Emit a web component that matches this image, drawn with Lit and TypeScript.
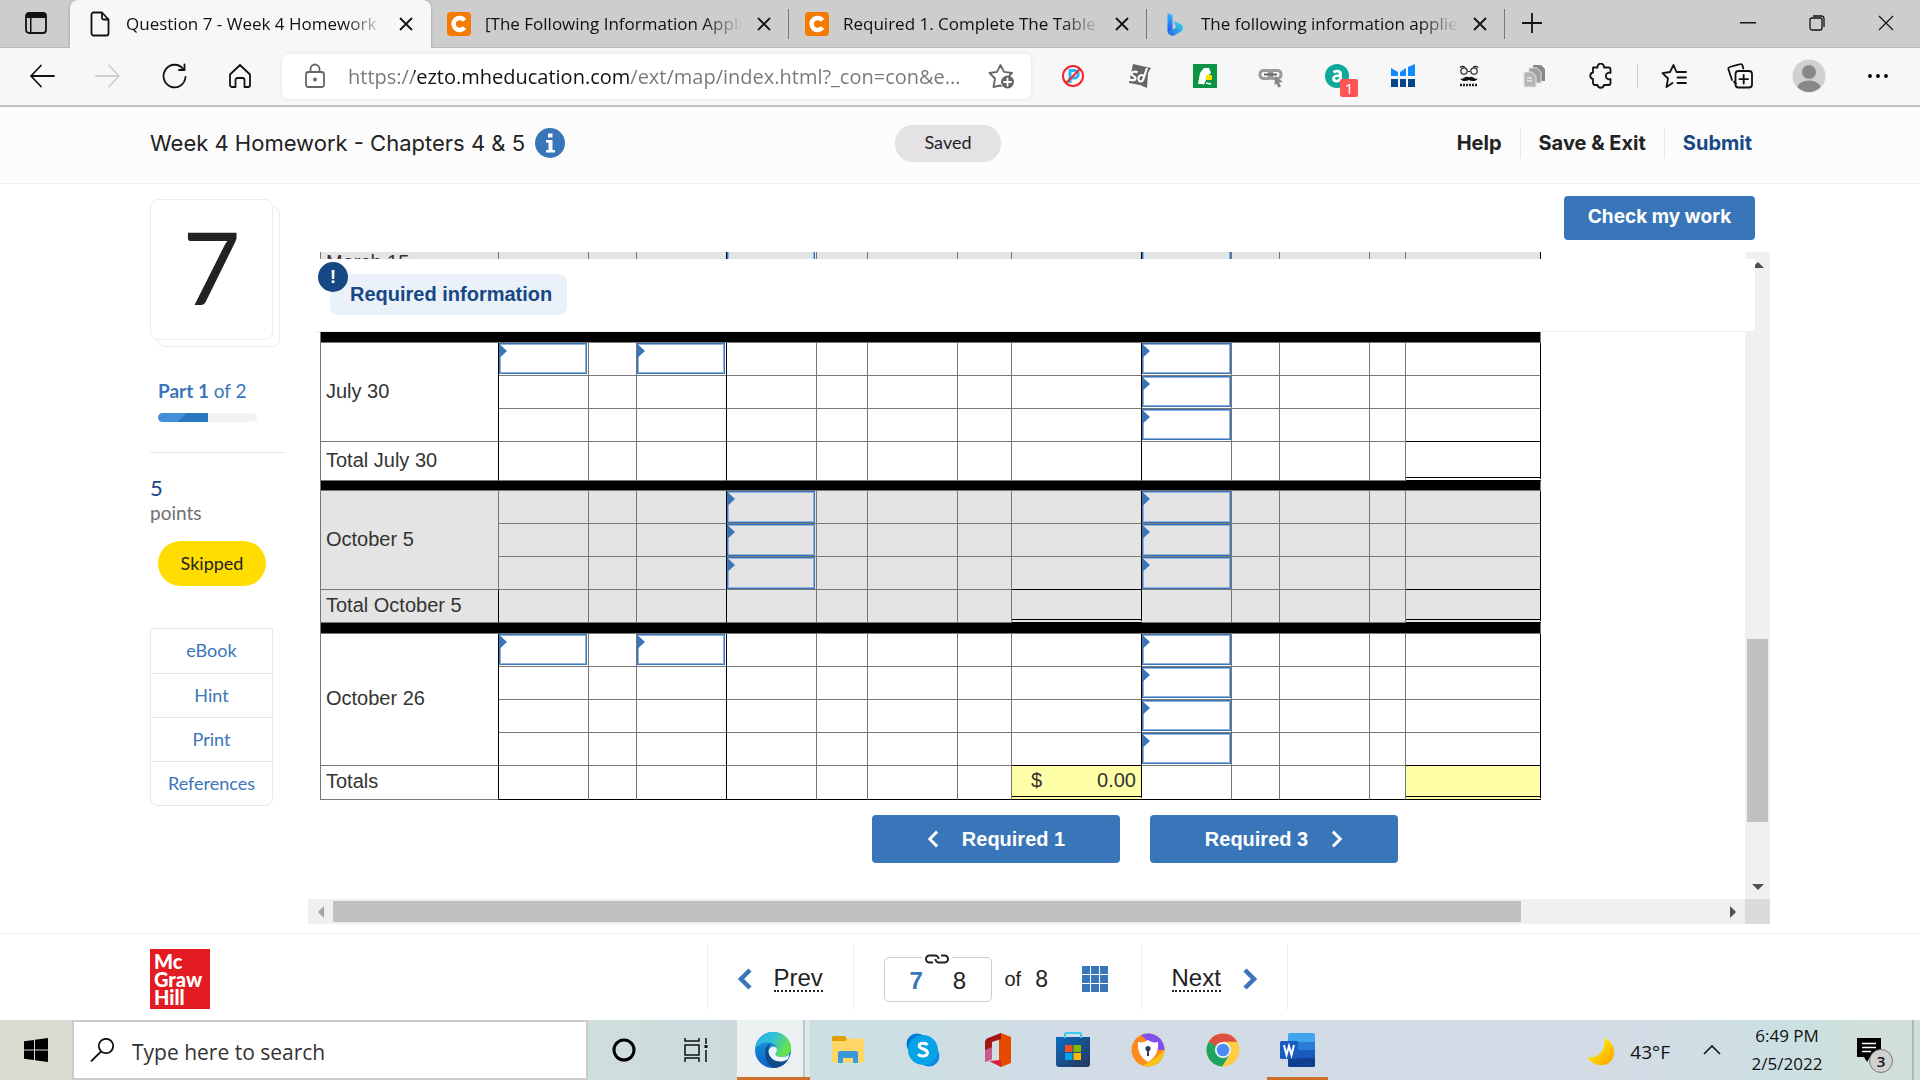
import { LitElement, html, svg, css, nothing } from "lit";
import { customElement, query } from "lit/decorators.js";
import { classMap } from "lit/directives/class-map.js";

/* ---------- Browser chrome ---------- */

const closeIcon = html`<svg width="14" height="14" viewBox="0 0 14 14" fill="none" stroke="#111" stroke-width="1.8"><path d="M1 1l12 12M13 1L1 13" /></svg>`;
const pageIcon = html`<svg width="20" height="26" viewBox="0 0 20 26" fill="none" stroke="#111" stroke-width="1.8" stroke-linejoin="round"><path d="M3.500 1.500h8.500l6.500 7v14a2 2 0 0 1-2 2h-13a2 2 0 0 1-2-2v-19a2 2 0 0 1 2-2z" /><path d="M12 1.500v5.500a1.500 1.500 0 0 0 1.500 1.500h5" /></svg>`;
const cheggIcon = html`<svg width="24" height="24" viewBox="0 0 24 24"><rect width="24" height="24" rx="4" fill="#f47b00" /><path d="M17.500 8.600A6 6 0 1 0 17.500 15.400" fill="none" stroke="#fff" stroke-width="4.400" /></svg>`;
const bingIcon = html`<svg width="24" height="24" viewBox="0 0 24 24"><defs><linearGradient id="bg1" x1="0" y1="0" x2="0" y2="1"><stop offset="0" stop-color="#37bdff" /><stop offset="1" stop-color="#1b48ef" /></linearGradient><linearGradient id="bg2" x1="0" y1="1" x2="1" y2="0"><stop offset="0" stop-color="#2764e7" /><stop offset="1" stop-color="#38e0ee" /></linearGradient></defs><path d="M4.500 1l5 2v15l-2.500 3.500-2.500-2z" fill="url(#bg1)" /><path d="M11 9l7.500 3.500c2 1.500 2 5 0 6.700L11 23.500c-2.500 1-6-1-6.500-4l8.500-3.700z" fill="url(#bg2)" /></svg>`;

interface Tab {
  title: string;
  icon: unknown;
  active?: boolean;
}

const tabs: Tab[] = [
  { title: "Question 7 - Week 4 Homework", icon: pageIcon, active: true },
  { title: "[The Following Information Appli", icon: cheggIcon },
  { title: "Required 1. Complete The Table T", icon: cheggIcon },
  { title: "The following information applie", icon: bingIcon },
];

const stroke = (body: unknown, color = "#111", size = 26) =>
  html`<svg width=${size} height=${size} viewBox="0 0 26 26" fill="none" stroke=${color} stroke-width="1.8" stroke-linejoin="round" stroke-linecap="round">${body}</svg>`;

const backIcon = stroke(svg`<path d="M12 2.500L2 13l10 10.500M2 13h23" />`);
const forwardIcon = stroke(svg`<path d="M14 2.500L24 13 14 23.500M24 13H1" />`, "#cfcfcf");
const reloadIcon = stroke(svg`<path d="M23.500 7V1.500M23.500 7H18M22.500 6.500A11 11.300 0 1 0 24.500 14" />`);
const homeIcon = stroke(svg`<path d="M3 11.500L13 2l10 9.500V22a2 2 0 0 1-2 2h-3.500v-7a2 2 0 0 0-2-2h-5a2 2 0 0 0-2 2v7H5a2 2 0 0 1-2-2z" />`);
const lockIcon = stroke(svg`<rect x="4" y="9" width="18" height="15" rx="2.500" /><path d="M8.500 9V6a4.500 4.500 0 0 1 9 0v3" /><circle cx="13" cy="16.500" r="1" fill="#666" />`, "#666");
const starAddIcon = stroke(svg`<path d="M13 23l-1-.5-6.500 1.500L7 15.500 1.500 10l7.500-1.200L12.500 2 16 8.800l8 1.200-2.500 2.500" /><circle cx="19.500" cy="19" r="6.500" fill="#666" stroke="none" /><path d="M19.500 15.500v7M16 19h7" stroke="#fff" />`, "#666");

const extensions: { label: string; icon: unknown }[] = [
  { label: "Blocker", icon: html`<svg width="24" height="24" viewBox="0 0 24 24"><path d="M9 19V6.500h4.500a3.500 3.500 0 0 1 0 7.500H9" fill="none" stroke="#29b6f6" stroke-width="3" /><circle cx="12" cy="12" r="10" fill="none" stroke="#f3242b" stroke-width="2" /><path d="M5 19L19 5" stroke="#f3242b" stroke-width="2" /></svg>` },
  { label: "Study", icon: html`<svg width="24" height="24" viewBox="0 0 24 24"><path d="M6 0l18 4-3 5-1 15-7-3-11-2 2-9z" fill="#666" /><path d="M10.500 8.500c-2-1.500-6-1-6 1.500 0 2.200 4.500 2 4 4.500-.4 2.300-4.500 2-7 .5M17 12c-3-2-6 0-5.500 3.500.5 2.500 3.500 2.500 4.500.5L20 4" fill="none" stroke="#fff" stroke-width="2.200" /></svg>` },
  { label: "Coupons", icon: html`<svg width="24" height="24" viewBox="0 0 24 24"><rect width="24" height="24" fill="#0b9444" /><path d="M7 9l4-5h5l2 5-5 4-2 7H5z" fill="#fff" /><path d="M10 20.500l3-6M13 19l5 1" stroke="#fff" stroke-width="1.500" /><rect x="13" y="11" width="6" height="5" rx="1" fill="#ffe100" /></svg>` },
  { label: "Links", icon: html`<svg width="26" height="24" viewBox="0 0 26 24" fill="none"><g stroke="#999" stroke-width="3"><rect x="2" y="6.500" width="12" height="8" rx="3.500" /><rect x="11" y="6.500" width="12" height="8" rx="3.500" /></g><path d="M6 10.500h13" stroke="#666" stroke-width="2" /><path d="M17 12l8 6-4 .5 2 4-3 1-1.500-4-2 2z" fill="#888" /></svg>` },
  { label: "Assistant", icon: html`<span class="ext-a"><svg width="24" height="24" viewBox="0 0 24 24"><circle cx="12" cy="12" r="12" fill="#0ca89b" /><path d="M8.500 8.500c2-2 7-2 7 1.500v7M15.500 12c-3-.8-7 0-7 2.700 0 3.300 6 3 7-.2" fill="none" stroke="#fff" stroke-width="2.800" /></svg><span class="count">1</span></span>` },
  { label: "Metrics", icon: html`<svg width="24" height="24" viewBox="0 0 24 24"><path d="M0 4l7 4v4H0zM9 8l6-4v8H9zM17 3l7-3v12h-7z" fill="#1189ff" /><path d="M0 15h7v8H0zM9 15h6v8H9zM17 15h7v8h-7z" fill="#064488" /></svg>` },
  { label: "Disguise", icon: html`<svg width="20" height="22" viewBox="0 0 20 22" fill="none" stroke="#222"><path d="M1 2.500c1.500-1.500 3-1.500 5-.5M19 2.500c-1.500-1.500-3-1.500-5-.5M9 6.500h2" stroke-width="1.200" /><circle cx="5" cy="6" r="3.200" stroke-width="1.200" /><circle cx="15" cy="6" r="3.200" stroke-width="1.200" /><path d="M10 12.300c-3-1.500-4.500.2-6 1.200-1 .6-2 .3-2.500 0 0 2.500 5.500 3.500 8.500 1.500 3 2 8.500 1 8.500-1.500-.5.300-1.500.6-2.500 0-1.500-1-3-2.700-6-1.200z" fill="#111" stroke="none" /><path d="M1 20h18" stroke-width="2.300" stroke-dasharray="2 1" /></svg>` },
  { label: "Copy", icon: html`<svg width="24" height="24" viewBox="0 0 24 24"><path d="M10 1h8l4 4v12H10z" fill="#888" /><path d="M6 4h8l4 4v11H6z" fill="#a0a0a0" stroke="#ddd" /><path d="M1 8h8l4 4v11H1z" fill="#b5b5b5" stroke="#e5e5e5" /><path d="M4 14h5M4 17h5" stroke="#fff" /></svg>` },
  { label: "Extensions", icon: stroke(svg`<path d="M5 4.500h4.500a3.300 3.300 0 1 1 6.500 0h4.500a2 2 0 0 1 2 2V10a3.300 3.300 0 1 0 0 6v4a2 2 0 0 1-2 2H16a3.300 3.300 0 0 1-6.500 0H7a2 2 0 0 1-2-2v-4a3.300 3.300 0 0 1 0-6.500z" />`) },
];

const favoritesIcon = stroke(svg`<path d="M15.500 9L12.500 2 9 9l-7.500 1.200L7 15.500 5.500 24l6-4M16.500 9H25M16.500 14.500H25M16.500 20H25" />`);
const collectionsIcon = stroke(svg`<path d="M5 17L1.500 6.500a2 2 0 0 1 1.300-2.500L13 1.200A2 2 0 0 1 15.500 2.500l.8 3M9 20.500a3 3 0 0 1-2-2" /><rect x="8.500" y="8" width="16.500" height="16.500" rx="3" /><path d="M16.700 12v8.500M12.500 16.200H21" />`);
const avatarIcon = html`<svg width="34" height="34" viewBox="0 0 34 34"><clipPath id="av"><circle cx="17" cy="17" r="16" /></clipPath><circle cx="17" cy="17" r="16.500" fill="#d2d0ce" /><g clip-path="url(#av)" fill="#8a8886"><circle cx="17" cy="13" r="7" /><ellipse cx="17" cy="30" rx="12" ry="8.500" /></g></svg>`;
const dotsIcon = html`<svg width="22" height="6" viewBox="0 0 22 6"><circle cx="3" cy="3" r="1.900" /><circle cx="11" cy="3" r="1.900" /><circle cx="19" cy="3" r="1.900" /></svg>`;

/* ---------- Worksheet data ---------- */

/* One entry per body column; the label column comes first in the table. */
const columns = [90, 48, 90, 90, 51, 90, 54, 130, 90, 48, 90, 36, 135];
const BALANCE_A = 7;
const BALANCE_B = 12;

interface Block {
  label: string;
  total: string;
  rows: number[][];
  shaded?: boolean;
  /** Balance columns that carry a double underline in the total row. */
  sums: number[];
  size: "short" | "tall" | "last" | "mid";
  final?: boolean;
}

const blocks: Block[] = [
  { label: "March 15", total: "Total March 15", shaded: true, rows: [[3, 8], [3, 8]], sums: [BALANCE_B], size: "mid" },
  { label: "July 30", total: "Total July 30", rows: [[0, 2, 8], [8], [8]], sums: [BALANCE_B], size: "tall" },
  { label: "October 5", total: "Total October 5", shaded: true, rows: [[3, 8], [3, 8], [3, 8]], sums: [BALANCE_A, BALANCE_B], size: "short" },
  { label: "October 26", total: "Totals", rows: [[0, 2, 8], [8], [8], [8]], sums: [BALANCE_A, BALANCE_B], size: "last", final: true },
];

@customElement("work-sheet")
export class WorkSheet extends LitElement {
  static styles = css`
    :host { display: block; }
    table { border-collapse: separate; border-spacing: 0; table-layout: fixed; width: 1221px; border-left: 1px solid #777; color: #333; font: 20px/24px "Liberation Sans", Arial, sans-serif; }
    col.label { width: 178px; }
    td, th { box-sizing: border-box; height: 33px; padding: 0; border: 0 solid #777; border-right-width: 1px; border-bottom-width: 1px; font-weight: 400; text-align: left; }
    th { padding: 0 0 3px 5px; border-right-color: #000; }
    .shaded td, .shaded th { background: #e4e4e4; }
    .shaded th.span { border-right-color: #777; }
    td.edge { border-right-color: #000; }
    td.over { border-bottom-color: #000; }
    .mid td, .mid th { height: 35px; }
    .tall td, .tall th { height: 39px; }
    .last td, .last th { height: 34px; }
    .last td { border-bottom-color: #000; }
    td.sum { border-bottom: 4px double #000; }
    .last td.sum { background: #ffffa8; }
    .rule td { height: 11px; background: #000; }
    .rule.slim td { height: 10px; }
    .money { display: flex; justify-content: space-between; padding: 0 5px 2px 19px; }
    .field { position: relative; display: flex; height: 32px; }
    .field svg { position: absolute; left: 0; top: 2px; }
    input { box-sizing: border-box; width: 88px; height: 31px; padding: 0 12px; border: 1px solid #3a75b9; box-shadow: inset 0 0 0 1px #8fb1da; background: transparent; font: inherit; color: inherit; outline: none; border-radius: 0; }
    .wide input { width: 89px; }
    .shaded input { height: 32px; }
  `;

  private cell(block: Block, row: number, col: number) {
    const isInput = block.rows[row].includes(col);
    const classes = {
      edge: col === 2 || col === 7 || col === 12,
      over: row === block.rows.length - 1 && block.sums.includes(col),
      wide: col === 8,
    };
    return html`<td class=${classMap(classes)}>${isInput
      ? html`<div class="field"><input type="text" aria-label="${block.label}, line ${row + 1}, column ${col + 1}" /><svg width="8" height="12" viewBox="0 0 8 12"><path d="M0 0h1.500L8 6l-6.500 6H0z" fill="#3a75b9" /></svg></div>`
      : nothing}</td>`;
  }

  private block(block: Block) {
    return html`
      <tbody class=${block.shaded ? "shaded" : ""}>
        ${block.rows.map((_, r) => html`<tr>
          ${r === 0 ? html`<th class="span" scope="rowgroup" rowspan=${block.rows.length}>${block.label}</th>` : nothing}
          ${columns.map((_w, c) => this.cell(block, r, c))}
        </tr>`)}
        <tr class=${block.size}>
          <th scope="row">${block.total}</th>
          ${columns.map((_w, c) => html`<td class=${classMap({ edge: c === 2 || c === 7 || c === 12, sum: block.sums.includes(c) })}>${block.final && c === BALANCE_A
            ? html`<div class="money"><span>$</span><span>0.00</span></div>`
            : nothing}</td>`)}
        </tr>
      </tbody>
      ${block.final ? nothing : html`<tbody><tr class=${classMap({ rule: true, slim: block.size === "tall" })}><td colspan="14"></td></tr></tbody>`}
    `;
  }

  render() {
    return html`<table>
      <colgroup><col class="label" />${columns.map((w) => html`<col style="width:${w}px" />`)}</colgroup>
      ${blocks.map((b) => this.block(b))}
    </table>`;
  }
}

/* ---------- Taskbar icons ---------- */

const edgeLogo = html`<svg width="36" height="36" viewBox="0 0 36 36"><defs><linearGradient id="e1" x1="0" y1="0" x2="1" y2=".4"><stop offset="0" stop-color="#2aa8e8" /><stop offset=".5" stop-color="#2fc2d8" /><stop offset="1" stop-color="#66e24a" /></linearGradient><linearGradient id="e2" x1="0" y1="0" x2="0" y2="1"><stop offset="0" stop-color="#1b9de2" /><stop offset="1" stop-color="#0b62c4" /></linearGradient></defs><circle cx="18" cy="18" r="18" fill="url(#e2)" /><path d="M0 17C1 7 9 0 18 0c11 0 18 8 18 15.500 0 6-4.500 9.500-9.500 9.500-4 0-6-1.500-6-2.800 0-1.200 1.500-1.700 1.500-4.700 0-4-4-7-9-7-6 0-11 3-13 6.500z" fill="url(#e1)" /><path d="M10 20c0-4.500 3-7.500 6-8.500-2.500 2-3 5-2.500 8 1 5.500 6 9.500 12 9.500 3.500 0 6-.8 7.500-2C30.500 32.500 25 36 18.500 36 13.500 34 10 27 10 20z" fill="#114a8b" /><path d="M22 17.500c-.3 3-1.500 3.500-1.500 4.700 0 1.300 2 2.800 6 2.800 4.500 0 7-1.500 8-3l-1.500 5c-3 2-5 2.500-8 2.500-6 0-11-4-11.500-10 .5-3 2.500-5 4.500-5 2.500 0 4 1.500 4 3z" fill="#fff" opacity=".92" /></svg>`;
const folderLogo = html`<svg width="32" height="28" viewBox="0 0 32 28"><path d="M0 1.500A1.500 1.500 0 0 1 1.500 0H13l2 3v4H0z" fill="#e0a100" /><path d="M0 5h13l3-2.500h16V25a1.500 1.500 0 0 1-1.500 1.500h-29A1.500 1.500 0 0 1 0 25z" fill="#ffd766" /><path d="M6 27V17a2 2 0 0 1 2-2h16a2 2 0 0 1 2 2v10h-5v-5H11v5z" fill="#3a96dd" /></svg>`;
const skypeLogo = html`<svg width="34" height="34" viewBox="0 0 34 34"><circle cx="11" cy="11" r="10.500" fill="#0078d4" /><circle cx="23" cy="23" r="10.500" fill="#0a8de0" /><circle cx="17" cy="17" r="15" fill="#06a3e8" /><path d="M21.500 12c-1.500-2-8-2.700-8.300.8-.2 3.700 8.500 2.700 8.300 7-.3 4-7 4-9.500 1.500" fill="none" stroke="#fff" stroke-width="3" /></svg>`;
const officeLogo = html`<svg width="28" height="34" viewBox="0 0 28 34"><path d="M17 0l10 4v26l-10 4-2-4V4z" fill="#e64a00" /><path d="M17 0v6L8 9v17l-7 3V9c0-2 1-3 3-4z" fill="#a31515" /><path d="M1 17l7-3v12l-7 3z" fill="#c55a8c" /><path d="M5 28l12-1v7z" fill="#d81e3c" /></svg>`;
const storeLogo = html`<svg width="36" height="36" viewBox="0 0 36 36"><defs><linearGradient id="st" x1="0" y1="0" x2="1" y2="1"><stop offset="0" stop-color="#0a6cc0" /><stop offset="1" stop-color="#28345a" /></linearGradient></defs><path d="M10 8V2.500A1.500 1.500 0 0 1 11.500 1h13A1.500 1.500 0 0 1 26 2.500V8" fill="none" stroke="#3cc8f0" stroke-width="2" /><path d="M1 5h34v27a3 3 0 0 1-3 3H4a3 3 0 0 1-3-3z" fill="url(#st)" /><path d="M10 3v3M26 3v3" stroke="#3cc8f0" stroke-width="2" /><path d="M10 13h7.500v7H10z" fill="#f25022" /><path d="M18.500 13H26v7h-7.500z" fill="#7fba00" /><path d="M10 21h7.500v7H10z" fill="#00a4ef" /><path d="M18.500 21H26v7h-7.500z" fill="#ffb900" /></svg>`;
const secureLogo = html`<svg width="34" height="34" viewBox="0 0 34 34"><circle cx="17" cy="17" r="16.500" fill="#ff8a1f" /><path d="M10 2A16.500 16.500 0 0 1 33.500 17H26z" fill="#8350f0" /><path d="M33.500 17A16.500 16.500 0 0 1 12 32.700l13-8z" fill="#f5c518" /><path d="M7 9c4 1 7 0 10-2 3 2 6 3 10 2 1 9-3 16-10 20C10 25 6 18 7 9z" fill="#fff" /><circle cx="17" cy="15.500" r="2.600" fill="#2f3a66" /><path d="M16 16h2v7h-2z" fill="#2f3a66" /></svg>`;
const chromeLogo = html`<svg width="34" height="34" viewBox="0 0 34 34"><circle cx="17" cy="17" r="16.500" fill="#ffcd41" /><path d="M17 17L2.700 8.700A16.500 16.500 0 0 1 31.300 8.700H17z" fill="#dd4f43" /><path d="M2.700 8.700A16.500 16.500 0 0 0 16 33.500l8-12.500-14.200 0z" fill="#1da362" /><path d="M2.700 8.700L9.800 21 17 17z" fill="#1da362" /><circle cx="17" cy="17" r="8" fill="#f4f4f4" /><circle cx="17" cy="17" r="6.300" fill="#4c8bf5" /></svg>`;
const wordLogo = html`<svg width="36" height="34" viewBox="0 0 36 34"><path d="M8 1.500A1.500 1.500 0 0 1 9.500 0h24A1.500 1.500 0 0 1 35 1.500V9H8z" fill="#41a5ee" /><path d="M8 9h27v8H8z" fill="#2b7cd3" /><path d="M8 17h27v8H8z" fill="#185abd" /><path d="M8 25h27v7.500a1.500 1.500 0 0 1-1.500 1.500h-24A1.500 1.500 0 0 1 8 32.500z" fill="#103f91" /><rect y="8" width="18" height="18" rx="1.500" fill="#185abd" /><path d="M4 12l2.500 10L9 13l2.500 9L14 12" fill="none" stroke="#fff" stroke-width="2" /></svg>`;
const apps: { name: string; icon: unknown; state?: string }[] = [
  { name: "Microsoft Edge", icon: edgeLogo, state: "current" },
  { name: "File Explorer", icon: folderLogo },
  { name: "Skype", icon: skypeLogo },
  { name: "Office", icon: officeLogo },
  { name: "Microsoft Store", icon: storeLogo },
  { name: "Secure Browser", icon: secureLogo },
  { name: "Google Chrome", icon: chromeLogo },
  { name: "Word", icon: wordLogo, state: "open" },
];

const chevron = (dir: "left" | "right", w: number, h: number, sw: number, color: string) =>
  html`<svg width=${w} height=${h} viewBox="0 0 14 22" fill="none" stroke=${color} stroke-width=${sw}><path d=${dir === "left" ? "M12 2L3 11l9 9" : "M2 2l9 9-9 9"} /></svg>`;

@customElement("app-root")
export class AppRoot extends LitElement {
  static styles = css`
    :host { display: flex; flex-direction: column; height: 100vh; min-height: 720px; background: #fff; color: #222; font-family: Lato, "Open Sans", sans-serif; overflow: hidden; }
    * { box-sizing: border-box; }
    svg { display: block; flex: none; }
    button { border: 0; margin: 0; padding: 0; background: none; font: inherit; color: inherit; cursor: pointer; }
    a { color: inherit; text-decoration: none; }
    input { border: 0; margin: 0; padding: 0; outline: none; }

    .tabs { display: flex; flex: none; height: 48px; background: #cdcdcd; border-bottom: 1px solid #bababa; font: 17px/24px "Open Sans", "Noto Sans", sans-serif; color: #111; }
    .tab-menu { display: grid; place-items: center; width: 72px; padding-bottom: 1px; }
    .tab { display: flex; align-items: center; gap: 14px; width: 358px; height: 48px; padding: 0 18px 0 16px; position: relative; }
    .tab.active { width: 361px; padding-left: 18px; margin-left: -2px; background: #f7f7f7; border-radius: 8px 8px 0 0; box-shadow: 0 0 3px #999; clip-path: inset(0 -4px 0 -4px); }
    .tab .icon { display: grid; place-items: center; width: 24px; }
    .tab .title { flex: 1; overflow: hidden; white-space: nowrap; mask-image: linear-gradient(90deg, #000 calc(100% - 40px), transparent); }
    .tab + .tab:not(.active)::after { content: ""; width: 1px; height: 30px; background: #777; position: absolute; right: 0; top: 9px; }
    .new-tab { display: grid; place-items: center; width: 54px; padding-bottom: 2px; }
    .window { display: flex; margin-left: auto; }
    .window button { display: grid; place-items: center; width: 69px; padding-bottom: 1px; }

    .toolbar { display: flex; align-items: center; flex: none; height: 59px; padding: 0 8px 1px 9px; background: #f7f7f7; border-bottom: 2px solid #c0c0c0; }
    .toolbar button { display: grid; place-items: center; width: 66px; height: 44px; }
    .address { display: flex; align-items: center; flex: 0 1 749px; height: 45px; padding: 0 8px 0 20px; margin-left: 9px; margin-right: 9px; border-radius: 7px; background: #fff; box-shadow: 0 0 4px #e2e2e2; }
    .address input { flex: 1; min-width: 0; height: 45px; margin-left: 20px; font: 20px/45px "Open Sans", "Noto Sans", sans-serif; color: transparent; background: linear-gradient(90deg, #777 66px, #111 66px, #111 282px, #777 282px); background-clip: text; -webkit-background-clip: text; }
    .address button { width: 44px; }
    .toolbar .split { width: 1px; height: 24px; margin: 0 3px; background: #ccc; }
    .toolbar button.profile { width: 72px; }
    .ext-a { position: relative; }
    .ext-a .count { position: absolute; left: 15px; top: 15px; width: 18px; height: 18px; border-radius: 2px; background: #ff5454; color: #fff; font: 15px/18px "Open Sans", sans-serif; text-align: center; }

    .head { display: grid; grid-template-columns: 1fr auto 1fr; align-items: center; flex: none; height: 77px; padding: 0 144px 4px 150px; background: #fcfcfc; border-bottom: 1px solid #eee; }
    .head h1 { display: flex; align-items: center; gap: 10px; margin: 0; font: 400 22px/30px Inter, Lato, sans-serif; white-space: nowrap; }
    .saved { height: 37px; padding: 0 29px; margin-right: 30px; border-radius: 18px; background: #e4e2e5; font-size: 18px; line-height: 35px; }
    .head nav { display: flex; justify-content: flex-end; font: 700 20px/30px Inter, Lato, sans-serif; white-space: nowrap; }
    .head nav a { padding: 0 18px; border-left: 1px solid #e8e8e8; }
    .head nav a:first-child { border: 0; }
    .head nav .submit { color: #174785; padding-right: 24px; }

    .main { display: flex; flex: 1; min-height: 0; padding: 0 150px 9px; }
    .side { width: 158px; padding-top: 15px; flex: none; }
    .card { position: relative; display: grid; place-items: center; width: 123px; height: 141px; padding-bottom: 8px; margin-bottom: 36px; border: 1px solid #ececec; border-radius: 8px; background: #fff; box-shadow: 7px 7px 0 -1px #fff, 7px 7px 0 0 #ececec; font-size: 100px; line-height: 100px; }
    .part { padding-left: 8px; font-size: 19px; line-height: 30px; color: #3a75b9; }
    .bar { width: 99px; height: 9px; margin: 7px 0 30px 8px; border-radius: 5px; background: #f2f2f2; overflow: hidden; }
    .bar i { display: block; height: 9px; background: linear-gradient(135deg, #4390d8 48%, #2a78c0 48%); }
    .side hr { width: 135px; height: 1px; margin: 0; border: 0; background: #eaeaea; }
    .score { margin: 23px 0 0; font-size: 22px; line-height: 24px; color: #174785; }
    .points { margin: 0 0 15px; font-size: 19px; line-height: 26px; color: #707070; }
    .skipped { width: 108px; height: 45px; margin: 0 0 42px 8px; border-radius: 23px; background: #fd0; font-size: 18px; line-height: 45px; text-align: center; }
    .tools { display: grid; grid-auto-rows: 44px; width: 123px; border: 1px solid #e8e8e8; border-radius: 0 0 8px 8px; font-size: 18px; line-height: 43px; text-align: center; color: #3a75b9; }
    .tools a + a { border-top: 1px solid #e8e8e8; }

    .work { display: flex; flex-direction: column; flex: 1; min-width: 0; }
    .actions { display: flex; justify-content: flex-end; padding: 12px 15px; }
    .primary { background: #3975b9; color: #fff; border-radius: 4px; font-weight: 700; }
    .check { width: 191px; height: 44px; padding-bottom: 3px; font-family: Inter, Lato, sans-serif; font-size: 19px; }
    .frame { position: relative; display: grid; grid-template: minmax(0, 1fr) 25px / minmax(0, 1fr) 25px; flex: 1; min-height: 0; }
    .view { overflow: hidden; }
    .sheet { width: 1654px; padding: 0 0 200px 12px; }
    .steps { display: flex; justify-content: center; gap: 30px; margin: 15px 12px 0 0; font: 700 20px/24px "Liberation Sans", Arial, sans-serif; }
    .steps button { display: flex; align-items: center; justify-content: center; gap: 23px; width: 248px; height: 48px; }
    .banner { position: absolute; left: 7px; right: 15px; top: 7px; height: 73px; background: #fff; border-bottom: 1px solid #eee; padding: 15px; }
    .banner h2 { display: inline-block; height: 41px; margin: 0; padding: 0 15px 0 20px; border-radius: 8px; background: #eaf1f9; color: #174785; font: 700 20px/41px "Liberation Sans", Arial, sans-serif; }
    .alert { position: absolute; left: 3px; top: 3px; width: 30px; height: 30px; border-radius: 50%; background: #174785; color: #fff; font: 700 18px/30px "Liberation Sans", Arial, sans-serif; text-align: center; }
    .vbar { display: flex; flex-direction: column; background: #f0f0f0; padding: 0 2px; }
    .hbar { display: flex; background: #f0f0f0; padding: 2px 0; }
    .vbar button, .hbar button { display: grid; place-items: center; }
    .vbar button { height: 25px; }
    .hbar button { width: 25px; }
    .thumb { background: #c1c1c1; }
    .v1 { flex: 362; } .v2 { flex: 183; } .v3 { flex: 52; }
    .h2 { flex: 1188; } .h3 { flex: 199; }
    .corner { background: #dbdbdb; }

    .foot { display: flex; align-items: center; flex: none; height: 87px; padding: 0 136px 0 150px; border-top: 1px solid #eee; font: 24px/28px "Liberation Sans", Arial, sans-serif; }
    .logo { width: 60px; height: 60px; margin-top: 4px; padding: 3px 0 0 4px; background: #e31b23; color: #fff; font: 900 20px/18px Lato, sans-serif; }
    .pager { display: flex; align-items: center; height: 66px; margin: 0 auto; }
    .pager > * { display: flex; align-items: center; height: 66px; border-left: 1px solid #eee; }
    .prev, .next { width: 146px; padding: 4px 30px 0; gap: 22px; }
    .next { width: 147px; border-right: 1px solid #eee; }
    .prev span, .next span { border-bottom: 2px dotted #222; line-height: 24px; }
    .pages { position: relative; width: 288px; padding: 4px 32px 0 30px; }
    .group { display: flex; gap: 30px; width: 108px; height: 45px; padding: 0 25px; border: 1px solid #ccc; border-radius: 5px; line-height: 45px; }
    .group b { color: #3a75b9; }
    .linked { position: absolute; left: 68px; top: 10px; padding: 0 3px; background: #fff; }
    .of { margin-left: 13px; font-size: 20px; }
    .count-all { margin: 0 34px 0 14px; font-size: 23px; }

    .task { display: flex; flex: none; height: 60px; background: linear-gradient(90deg, #dadbd0 0, #d3dede 16%, #cddedd 33%, #ccdadb 38%, #cbe0e3 44%, #d1dce6 55%, #d3dbe5 85%, #cbe0e3 93%, #d0e0da 97%, #d2ded8); font: 18px/24px "Open Sans", "Noto Sans", sans-serif; color: #111; }
    .task button { display: grid; place-items: center; }
    .start { width: 72px; }
    .search { display: flex; align-items: center; gap: 18px; width: 516px; padding-left: 16px; background: #fff; border: 2px solid #ccc; }
    .search input { flex: 1; padding-top: 3px; font: 21px/28px "Open Sans", "Noto Sans", sans-serif; color: #333; background: none; }
    .search input::placeholder { color: #333; opacity: 1; }
    .cortana { width: 72px; }
    .views { width: 72px; margin-right: 5px; }
    .app { width: 75px; height: 60px; }
    .app.current { width: 73px; background: linear-gradient(90deg, #ebf1f1 66px, #bccaca 66px, #bccaca 68px, #dfe9e9 68px); box-shadow: inset 0 -3px #ce7029; padding-right: 1px; }
    .app.open { width: 61px; margin-left: 7px; box-shadow: inset 0 -3px #ce7029; }
    .tray { display: flex; align-items: center; margin-left: auto; }
    .weather { display: flex; align-items: center; gap: 15px; margin-right: 6px; font-size: 19px; padding-top: 4px; }
    .more { width: 72px; }
    .clock { display: grid; gap: 4px; width: 78px; font-size: 17px; line-height: 24px; text-align: center; white-space: nowrap; }
    .notes { position: relative; width: 88px; height: 60px; border-right: 2px solid #a9bbb6; margin-right: 6px; }
    .notes .num { position: absolute; left: 43px; top: 29px; width: 24px; height: 24px; border: 1px solid #777; border-radius: 50%; background: #d0d0d0; font: 600 15px/22px "Open Sans", sans-serif; text-align: center; }
  `;

  @query(".view") private view!: HTMLElement;

  /* The worksheet opens part-way down, inside the March 15 block. */
  firstUpdated() {
    const sheet = this.view.querySelector("work-sheet") as WorkSheet;
    sheet.updateComplete.then(() => {
      this.view.scrollTop = 21;
    });
  }

  private renderTabs() {
    return html`<header class="tabs">
      <button class="tab-menu" aria-label="Tab actions"><svg width="22" height="22" viewBox="0 0 22 22"><rect x="1" y="1" width="20" height="20" rx="3" fill="none" stroke="#111" stroke-width="1.800" /><path d="M1 6V4a3 3 0 0 1 3-3h14a3 3 0 0 1 3 3v2zM5 6h1.500v15H5z" fill="#111" /></svg></button>
      ${tabs.map((t) => html`<div class=${classMap({ tab: true, active: !!t.active })}>
        <span class="icon">${t.icon}</span><span class="title">${t.title}</span>
        <button aria-label="Close tab">${closeIcon}</button>
      </div>`)}
      <button class="new-tab" aria-label="New tab"><svg width="22" height="22" viewBox="0 0 22 22" stroke="#111" stroke-width="1.800"><path d="M11 1v20M1 11h20" /></svg></button>
      <div class="window">
        <button aria-label="Minimize"><svg width="16" height="16" viewBox="0 0 16 16"><path d="M0 7h16v1.500H0z" fill="#111" /></svg></button>
        <button aria-label="Restore"><svg width="16" height="16" viewBox="0 0 16 16" fill="none" stroke="#111" stroke-width="1.300"><rect x="1" y="3" width="12" height="12" rx="2" /><path d="M4 1h8.500A2.500 2.500 0 0 1 15 3.500V12" /></svg></button>
        <button aria-label="Close"><svg width="16" height="16" viewBox="0 0 16 16" stroke="#111" stroke-width="1.200"><path d="M1 1l14 14M15 1L1 15" /></svg></button>
      </div>
    </header>`;
  }

  private renderToolbar() {
    return html`<div class="toolbar">
      <button aria-label="Back">${backIcon}</button>
      <button aria-label="Forward">${forwardIcon}</button>
      <button aria-label="Refresh">${reloadIcon}</button>
      <button aria-label="Home">${homeIcon}</button>
      <div class="address">${lockIcon}
        <input type="text" aria-label="Address" .value=${"https://ezto.mheducation.com/ext/map/index.html?_con=con&e..."} />
        <button aria-label="Add to favorites">${starAddIcon}</button>
      </div>
      ${extensions.map((e) => html`<button aria-label=${e.label}>${e.icon}</button>`)}
      <span class="split"></span>
      <button aria-label="Favorites">${favoritesIcon}</button>
      <button aria-label="Collections">${collectionsIcon}</button>
      <button class="profile" aria-label="Profile">${avatarIcon}</button>
      <button aria-label="Settings">${dotsIcon}</button>
    </div>`;
  }

  private renderSide() {
    return html`<aside class="side">
      <div class="card">7</div>
      <div class="part"><b>Part 1</b> of 2</div>
      <div class="bar"><i style="width:${(1 / 2) * 100}%"></i></div>
      <hr />
      <p class="score">5</p>
      <p class="points">points</p>
      <div class="skipped">Skipped</div>
      <nav class="tools"><a href="#ebook">eBook</a><a href="#hint">Hint</a><a href="#print">Print</a><a href="#references">References</a></nav>
    </aside>`;
  }

  private renderWork() {
    const tri = (d: string, w: number, h: number, color = "#505050") => html`<svg width=${w} height=${h} viewBox="0 0 ${w} ${h}"><path d=${d} fill=${color} /></svg>`;
    return html`<section class="work">
      <div class="actions"><button class="primary check">Check my work</button></div>
      <div class="frame">
        <div class="view"><div class="sheet">
          <work-sheet></work-sheet>
          <div class="steps">
            <button class="primary">${chevron("left", 12, 18, 3.5, "#fff")}Required 1</button>
            <button class="primary">Required 3${chevron("right", 12, 18, 3.5, "#fff")}</button>
          </div>
        </div></div>
        <div class="vbar">
          <button aria-label="Scroll up">${tri("M6 0l6 6H0z", 12, 6)}</button>
          <span class="v1"></span><span class="v2 thumb"></span><span class="v3"></span>
          <button aria-label="Scroll down">${tri("M0 0h12L6 6z", 12, 6)}</button>
        </div>
        <div class="hbar">
          <button aria-label="Scroll left">${tri("M6 0v12L0 6z", 6, 12, "#a3a3a3")}</button>
          <span class="h2 thumb"></span><span class="h3"></span>
          <button aria-label="Scroll right">${tri("M0 0l6 6-6 6z", 6, 12)}</button>
        </div>
        <div class="corner"></div>
        <div class="banner"><h2>Required information</h2><span class="alert">!</span></div>
      </div>
    </section>`;
  }

  private renderFoot() {
    return html`<footer class="foot">
      <div class="logo">Mc<br />Graw<br />Hill</div>
      <nav class="pager" aria-label="Questions">
        <a class="prev" href="#prev">${chevron("left", 14, 22, 4.5, "#3a75b9")}<span>Prev</span></a>
        <div class="pages">
          <div class="group"><b>7</b><span>8</span></div>
          <span class="linked"><svg width="24" height="10" viewBox="0 0 24 10" fill="none" stroke="#222" stroke-width="2"><path d="M8 8.500H4.500a3.500 3.500 0 0 1 0-7H10A3.500 3.500 0 0 1 13.500 5M16 1.500h3.500a3.500 3.500 0 0 1 0 7H14A3.500 3.500 0 0 1 10.500 5" /></svg></span>
          <span class="of">of</span><span class="count-all">8</span>
          <svg width="26" height="26" viewBox="0 0 26 26" fill="#3a75b9">${[0, 9, 18].map((y) => [0, 9, 18].map((x) => svg`<rect x=${x} y=${y} width="8" height="8" />`))}</svg>
        </div>
        <a class="next" href="#next"><span>Next</span>${chevron("right", 14, 22, 4.5, "#3a75b9")}</a>
      </nav>
    </footer>`;
  }

  private renderTask() {
    return html`<div class="task">
      <button class="start" aria-label="Start"><svg width="24" height="24" viewBox="0 0 24 24"><path d="M0 3.300l10-1.400v9.600H0zM11 1.700L24 0v11.500H11zM0 12.500h10v9.600L0 20.700zM11 12.500h13V24l-13-1.700z" /></svg></button>
      <label class="search"><svg width="24" height="24" viewBox="0 0 24 24" fill="none" stroke="#111" stroke-width="1.800"><circle cx="16" cy="8" r="7.200" /><path d="M11 13.500L1 23.500" /></svg><input type="search" aria-label="Search" placeholder="Type here to search" /></label>
      <button class="cortana" aria-label="Cortana"><svg width="24" height="24" viewBox="0 0 24 24"><circle cx="12" cy="12" r="10" fill="none" stroke="#000" stroke-width="3" /></svg></button>
      <button class="views" aria-label="Task view"><svg width="24" height="24" viewBox="0 0 24 24" fill="none" stroke="#111" stroke-width="1.500"><path d="M1 0v3h14V0M1 24v-4h14v4M1 7h14v10H1zM22 0v6M22 12v12" /><path d="M20.500 7h3v3h-3z" fill="#111" stroke="none" /></svg></button>
      ${apps.map((a) => html`<button class="app ${a.state ?? ""}" aria-label=${a.name}>${a.icon}</button>`)}
      <div class="tray">
        <span class="weather"><svg width="28" height="28" viewBox="0 0 28 28"><defs><linearGradient id="mn" x1="0" y1="0" x2="1" y2="1"><stop offset=".3" stop-color="#ffe600" /><stop offset="1" stop-color="#ff9d00" /></linearGradient></defs><path d="M17 0c8 3 12 11 9.500 18.500C23 29 8 31 0 19c9 2.500 20-5 17-19z" fill="url(#mn)" /></svg>43°F</span>
        <button class="more" aria-label="Hidden icons"><svg width="18" height="10" viewBox="0 0 18 10" fill="none" stroke="#111" stroke-width="1.600"><path d="M1 9l8-8 8 8" /></svg></button>
        <div class="clock"><span>6:49 PM</span><span>2/5/2022</span></div>
        <button class="notes" aria-label="Notifications"><svg width="24" height="24" viewBox="0 0 24 24"><path d="M0 0h24v19H13l-3 5-3-5H0z" /><path d="M5 5.500h14M5 9.500h14M5 13.500h9" stroke="#fff" stroke-width="1.300" /></svg><span class="num">3</span></button>
      </div>
    </div>`;
  }

  render() {
    return html`
      ${this.renderTabs()}
      ${this.renderToolbar()}
      <div class="head">
        <h1>Week 4 Homework - Chapters 4 &amp; 5<svg width="30" height="30" viewBox="0 0 30 30"><circle cx="15" cy="15" r="15" fill="#3975b9" /><path d="M13 5.500h4.500v4H13zM11 12h6.500v10H20v2.500h-9V22h2.500v-7.500H11z" fill="#fff" /></svg></h1>
        <div class="saved">Saved</div>
        <nav><a href="#help">Help</a><a href="#exit">Save &amp; Exit</a><a class="submit" href="#submit">Submit</a></nav>
      </div>
      <main class="main">${this.renderSide()}${this.renderWork()}</main>
      ${this.renderFoot()}
      ${this.renderTask()}
    `;
  }
}
